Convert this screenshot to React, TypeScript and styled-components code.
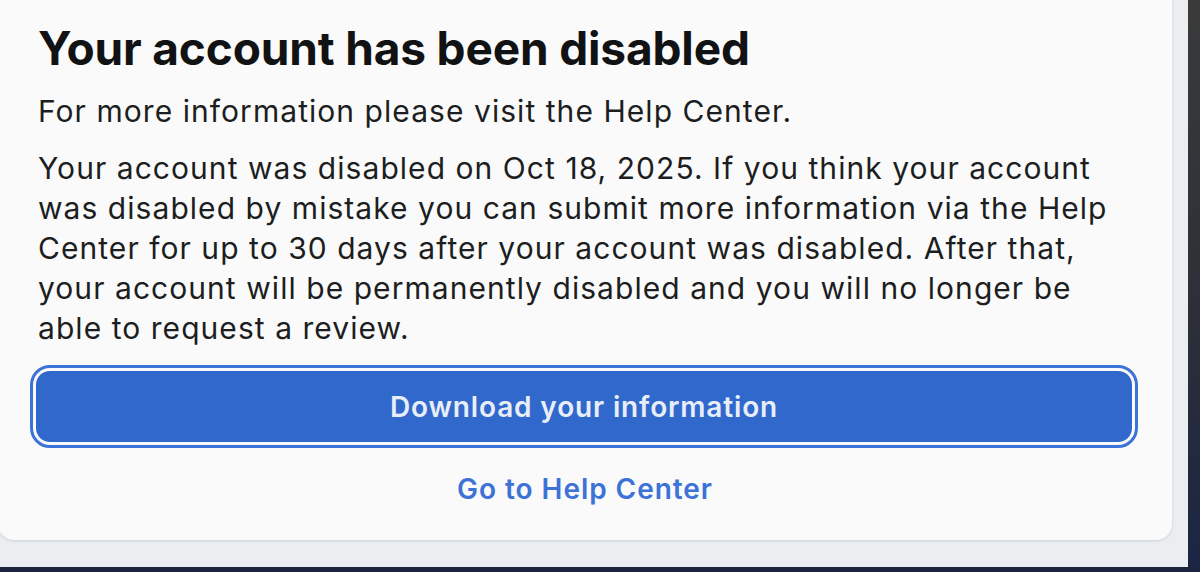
import React from "react";
import styled, { createGlobalStyle } from "styled-components";

const GlobalStyle = createGlobalStyle`
  html, body {
    margin: 0;
    padding: 0;
    background: #1a2340;
  }
  * { box-sizing: border-box; }
`;

const Screen = styled.div`
  width: 1200px;
  height: 572px;
  display: grid;
  grid-template-columns: 1188px 12px;
  grid-template-rows: 567px 5px;
  background: linear-gradient(180deg, #3a3a3a 0%, #2c2f38 55%, #1b2544 100%);
  overflow: hidden;
`;

const Backdrop = styled.div`
  background: #ebeef0;
  display: flex;
  align-items: flex-start;
  overflow: hidden;
`;

const BottomEdge = styled.div`
  grid-column: 1 / 3;
  background: #1a2340;
`;

const Card = styled.div`
  width: 1174px;
  margin: -16px 0 0 -2px;
  padding: 37px 40px 31px 40px;
  background: #fafafa;
  border-radius: 16px;
  box-shadow: 0 1px 3px rgba(0, 0, 0, 0.12);
  display: flex;
  flex-direction: column;
  font-family: Inter, "Noto Sans", sans-serif;
  color: #1c1e21;
`;

const Title = styled.h1`
  margin: 0;
  font-size: 46px;
  line-height: 54px;
  font-weight: 700;
  letter-spacing: -0.15px;
  color: #111214;
`;

const Text = styled.p<{ $gap: number }>`
  margin: ${(p) => p.$gap}px 0 0;
  font-size: 30px;
  line-height: 40px;
  font-weight: 400;
  letter-spacing: 1.05px;
`;

const PrimaryButton = styled.button`
  margin: 23px 0 0 -2px;
  height: 71px;
  width: calc(100% + 2px);
  border: none;
  border-radius: 14px;
  background: #3168cc;
  color: #e8eef8;
  font-family: Inter, "Noto Sans", sans-serif;
  font-size: 28px;
  font-weight: 600;
  letter-spacing: 0.85px;
  outline: 3px solid #3b73d8;
  outline-offset: 3px;
  cursor: pointer;
`;

const LinkButton = styled.button`
  margin-top: 27px;
  height: 40px;
  border: none;
  background: transparent;
  color: #3d72d6;
  font-family: Inter, "Noto Sans", sans-serif;
  font-size: 28px;
  font-weight: 600;
  letter-spacing: 0.95px;
  cursor: pointer;
`;

export default function App() {
  return (
    <>
      <GlobalStyle />
      <Screen>
        <Backdrop>
          <Card>
            <Title>Your account has been disabled</Title>
            <Text $gap={16}>For more information please visit the Help Center.</Text>
            <Text $gap={17}>
              Your account was disabled on Oct 18, 2025. If you think your account
              <br />
              was disabled by mistake you can submit more information via the Help
              <br />
              Center for up to 30 days after your account was disabled. After that,
              <br />
              your account will be permanently disabled and you will no longer be
              <br />
              able to request a review.
            </Text>
            <PrimaryButton>Download your information</PrimaryButton>
            <LinkButton>Go to Help Center</LinkButton>
          </Card>
        </Backdrop>
        <div />
        <BottomEdge />
      </Screen>
    </>
  );
}
